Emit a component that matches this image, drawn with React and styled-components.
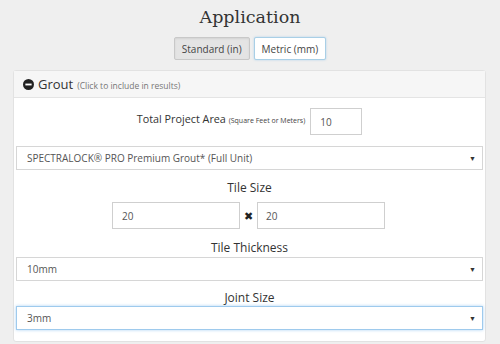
import React from "react";
import styled, { createGlobalStyle } from "styled-components";

const GlobalStyle = createGlobalStyle`
  html, body {
    margin: 0;
    padding: 0;
    background: #efefef;
  }
  body {
    font-family: "Open Sans", "Liberation Sans", sans-serif;
    color: #333;
  }
`;

const Page = styled.div`
  width: 500px;
  height: 344px;
  overflow: hidden;
  display: flex;
  flex-direction: column;
  align-items: center;
`;

const Title = styled.h1`
  margin: 4px 0 0;
  font-family: "DejaVu Serif", "Liberation Serif", serif;
  font-weight: normal;
  font-size: 17.5px;
  line-height: 26px;
  color: #333;
`;

const Toggle = styled.div`
  display: flex;
  gap: 4px;
  margin-top: 7px;
`;

const UnitButton = styled.button`
  height: 23px;
  padding: 0 7px;
  font-family: "Open Sans", sans-serif;
  font-size: 10px;
  color: #444;
  border-radius: 2px;
  border: 1px solid ${p => (p.active ? "#a9cfe6" : "#c8c8c8")};
  background: ${p => (p.active ? "#fff" : "#e4e4e4")};
  box-shadow: ${p => (p.active ? "0 0 2px rgba(102,175,233,0.5)" : "inset 0 1px 2px rgba(0,0,0,0.08)")};
`;

const Panel = styled.div`
  align-self: stretch;
  margin: 10px 14px 0 13px;
  background: #fff;
  border: 1px solid #e2e2e2;
  border-radius: 3px;
  height: 270px;
  display: flex;
  flex-direction: column;
`;

const PanelHeader = styled.div`
  height: 26px;
  background: #f6f6f6;
  border-bottom: 1px solid #e4e4e4;
  display: flex;
  align-items: center;
  padding-left: 9px;
  gap: 4px;
`;

const HeaderTitle = styled.span`
  font-size: 13px;
  color: #333;
`;

const HeaderNote = styled.span`
  font-size: 8.5px;
  color: #777;
  margin-top: 2px;
`;

const PanelBody = styled.div`
  padding: 10px 2px 0;
  display: flex;
  flex-direction: column;
  align-items: center;
`;

const AreaRow = styled.div`
  display: flex;
  align-items: flex-start;
  gap: 5px;
`;

const AreaLabel = styled.span`
  font-size: 10.8px;
  color: #333;
  margin-top: 3px;
  small {
    font-size: 7px;
    color: #444;
  }
`;

const TextInput = styled.div`
  box-sizing: border-box;
  width: ${p => p.w}px;
  height: 27px;
  border: 1px solid #cfcfcf;
  background: #fff;
  display: flex;
  align-items: center;
  padding-left: ${p => p.pad || 9}px;
  font-size: 10px;
  color: #555;
`;

const Select = styled.div`
  box-sizing: border-box;
  align-self: stretch;
  height: 24px;
  margin-top: ${p => p.mt}px;
  border: 1px solid ${p => (p.focus ? "#9ecaed" : "#d6d6d6")};
  box-shadow: ${p => (p.focus ? "0 0 3px rgba(102,175,233,0.55)" : "none")};
  display: flex;
  align-items: center;
  justify-content: space-between;
  padding: 0 6px 0 10px;
  font-size: 10px;
  color: #555;
`;

const Caret = styled.span`
  font-size: 7px;
  color: #333;
`;

const FieldLabel = styled.div`
  font-size: 12px;
  color: #333;
  margin-top: ${p => p.mt}px;
  line-height: 16px;
`;

const SizeRow = styled.div`
  display: flex;
  align-items: center;
  gap: 4px;
  margin-top: 6px;
  margin-left: -2px;
`;

const Times = styled.span`
  font-size: 11px;
  color: #222;
  width: 9px;
  text-align: center;
`;

const MinusIcon = () => (
  <svg width="11" height="11" viewBox="0 0 12 12">
    <circle cx="6" cy="6" r="6" fill="#222" />
    <rect x="2.6" y="5" width="6.8" height="2" fill="#fff" />
  </svg>
);

export default function App() {
  return (
    <Page>
      <GlobalStyle />
      <Title>Application</Title>
      <Toggle>
        <UnitButton>Standard (in)</UnitButton>
        <UnitButton active>Metric (mm)</UnitButton>
      </Toggle>
      <Panel>
        <PanelHeader>
          <MinusIcon />
          <HeaderTitle>Grout</HeaderTitle>
          <HeaderNote>(Click to include in results)</HeaderNote>
        </PanelHeader>
        <PanelBody>
          <AreaRow>
            <AreaLabel>
              Total Project Area <small>(Square Feet or Meters)</small>
            </AreaLabel>
            <TextInput w={52}>10</TextInput>
          </AreaRow>
          <Select mt={11}>
            SPECTRALOCK® PRO Premium Grout* (Full Unit)
            <Caret>▼</Caret>
          </Select>
          <FieldLabel mt={10}>Tile Size</FieldLabel>
          <SizeRow>
            <TextInput w={128}>20</TextInput>
            <Times>✖</Times>
            <TextInput w={128} pad={8}>20</TextInput>
          </SizeRow>
          <FieldLabel mt={11}>Tile Thickness</FieldLabel>
          <Select mt={1}>
            10mm
            <Caret>▼</Caret>
          </Select>
          <FieldLabel mt={9}>Joint Size</FieldLabel>
          <Select mt={0} focus>
            3mm
            <Caret>▼</Caret>
          </Select>
        </PanelBody>
      </Panel>
    </Page>
  );
}
